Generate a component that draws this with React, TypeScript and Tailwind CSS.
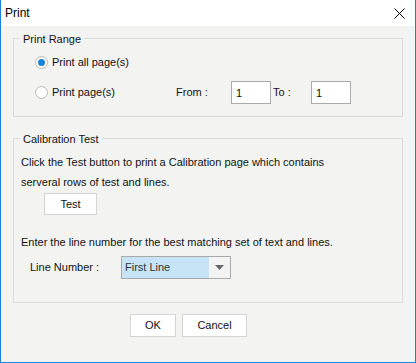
import React, { useState } from "react";

const font = { fontFamily: '"Liberation Sans", Arial, sans-serif' };

function Radio({ checked, label, onClick }: { checked: boolean; label: string; onClick: () => void }) {
  return (
    <button type="button" onClick={onClick} className="flex items-center gap-[4px] text-left">
      <span className="flex h-[13px] w-[13px] items-center justify-center rounded-full border border-[#b9b9b9] bg-white">
        {checked && <span className="h-[7px] w-[7px] rounded-full bg-[#1883d7]" />}
      </span>
      <span>{label}</span>
    </button>
  );
}

export default function App() {
  const [all, setAll] = useState(true);
  const [from, setFrom] = useState("1");
  const [to, setTo] = useState("1");

  return (
    <div
      className="flex h-[363px] w-[416px] flex-col border-x border-b border-[#1883d7] text-[11px] text-[#111]"
      style={font}
    >
      {/* title bar */}
      <div className="flex h-[26px] items-center justify-between bg-white pl-[4px] pr-[10px]">
        <span className="text-[12px] text-black">Print</span>
        <svg width="11" height="11" viewBox="0 0 11 11" className="text-black">
          <path d="M0.5 0.5 L10.5 10.5 M10.5 0.5 L0.5 10.5" stroke="currentColor" strokeWidth="1" />
        </svg>
      </div>

      <div className="flex flex-1 flex-col bg-[#f3f4f2] px-[12px]">
        {/* Print Range */}
        <div className="relative mt-[12px] h-[79px] border border-[#dadada]">
          <span className="absolute -top-[8px] left-[6px] bg-[#f3f4f2] px-[3px] leading-[16px]">Print Range</span>
          <div className="flex flex-col pl-[21px] pt-[13px]">
            <div className="flex h-[20px] items-center">
              <Radio checked={all} label="Print all page(s)" onClick={() => setAll(true)} />
            </div>
            <div className="mt-[9px] flex h-[23px] items-center">
              <div className="w-[141px]">
                <Radio checked={!all} label="Print page(s)" onClick={() => setAll(false)} />
              </div>
              <span className="w-[55px]">From :</span>
              <input
                value={from}
                onChange={(e) => setFrom(e.target.value)}
                className="h-[23px] w-[40px] border border-[#ababab] bg-white px-[4px] outline-none"
              />
              <span className="ml-[2px] w-[38px]">To :</span>
              <input
                value={to}
                onChange={(e) => setTo(e.target.value)}
                className="h-[23px] w-[40px] border border-[#ababab] bg-white px-[4px] outline-none"
              />
            </div>
          </div>
        </div>

        {/* Calibration Test */}
        <div className="relative mt-[21px] h-[165px] border border-[#dadada]">
          <span className="absolute -top-[8px] left-[6px] bg-[#f3f4f2] px-[3px] leading-[16px]">Calibration Test</span>
          <div className="flex flex-col items-start pl-[7px] pt-[13px]">
            <p className="leading-[20px]">Click the Test button to print a Calibration page which contains</p>
            <p className="leading-[20px]">serveral rows of test and lines.</p>
            <button
              type="button"
              className="ml-[23px] mt-[1px] h-[22px] w-[53px] border border-[#d4d4d4] bg-white"
            >
              Test
            </button>
            <p className="mt-[17px] leading-[20px]">Enter the line number for the best matching set of text and lines.</p>
            <div className="ml-[9px] mt-[4px] flex items-center">
              <span className="w-[91px]">Line Number :</span>
              <div className="flex h-[23px] w-[110px] border border-[#a9a9a9]">
                <span className="flex flex-1 items-center bg-[#c6e4f6] pl-[3px] text-[#333]">First Line</span>
                <span className="flex w-[21px] items-center justify-center bg-[#f3f3f3]">
                  <svg width="9" height="5" viewBox="0 0 9 5">
                    <path d="M0 0 H9 L4.5 5 Z" fill="#666" />
                  </svg>
                </span>
              </div>
            </div>
          </div>
        </div>

        {/* buttons */}
        <div className="ml-[117px] mt-[11px] flex gap-[6px]">
          <button type="button" className="h-[23px] w-[46px] border border-[#d4d4d4] bg-white">
            OK
          </button>
          <button type="button" className="h-[23px] w-[65px] border border-[#d4d4d4] bg-white">
            Cancel
          </button>
        </div>
      </div>
    </div>
  );
}
